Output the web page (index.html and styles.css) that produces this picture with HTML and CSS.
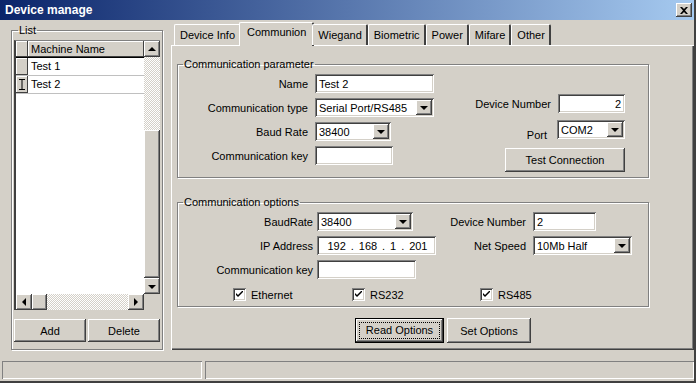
FILE: index.html
```html
<!DOCTYPE html>
<html>
<head>
    <link rel="stylesheet" href="styles.css">
</head>
<body>
    <div class="window">
        <div class="titlebar">
            <span class="title">Device manage</span>
            <span class="close-btn">
                <svg width="8" height="7" viewBox="0 0 8 7"><path d="M0 0h2l2 2 2-2h2L5 3.5 8 7H6L4 5 2 7H0l3-3.5z" fill="#000"/></svg>
            </span>
        </div>

        <div class="main">
            <!-- left: machine list -->
            <fieldset class="group list-group">
                <legend>List</legend>
                <div class="grid">
                    <div class="grid-view">
                        <div class="grid-rows">
                            <div class="grid-row head"><span class="ind"></span><span class="cell">Machine Name</span></div>
                            <div class="grid-row"><span class="ind"></span><span class="cell">Test 1</span></div>
                            <div class="grid-row">
                                <span class="ind">
                                    <svg width="6" height="11" viewBox="0 0 6 11"><path d="M0 0h6v1H3.5v9H6v1H0v-1h2.5V1H0z" fill="#000"/></svg>
                                </span>
                                <span class="cell">Test 2</span>
                            </div>
                        </div>
                        <div class="vscroll">
                            <span class="sb-btn"><i class="tri up"></i></span>
                            <span class="sb-track top"></span>
                            <span class="sb-thumb"></span>
                            <span class="sb-btn"><i class="tri down"></i></span>
                        </div>
                    </div>
                    <div class="hscroll">
                        <span class="sb-btn"><i class="tri left"></i></span>
                        <span class="sb-thumb h"></span>
                        <span class="sb-track"></span>
                        <span class="sb-btn"><i class="tri right"></i></span>
                        <span class="sb-corner"></span>
                    </div>
                </div>
                <div class="list-buttons">
                    <button class="btn">Add</button>
                    <button class="btn">Delete</button>
                </div>
            </fieldset>

            <!-- right: tabs -->
            <div class="tabs">
                <div class="tab-strip">
                    <span class="tab">Device Info</span>
                    <span class="tab active">Communion</span>
                    <span class="tab">Wiegand</span>
                    <span class="tab">Biometric</span>
                    <span class="tab">Power</span>
                    <span class="tab">Mifare</span>
                    <span class="tab">Other</span>
                </div>
                <div class="tab-panel">
                    <fieldset class="group param-group">
                        <legend>Communication parameter</legend>
                        <div class="param-left">
                            <label>Name</label>
                            <span class="field w119">Test 2</span>
                            <label>Communication type</label>
                            <span class="field combo w119">Serial Port/RS485<span class="drop"><i class="tri down"></i></span></span>
                            <label>Baud Rate</label>
                            <span class="field combo w76">38400<span class="drop"><i class="tri down"></i></span></span>
                            <label>Communication key</label>
                            <span class="field w78"></span>
                        </div>
                        <div class="param-right">
                            <label>Device Number</label>
                            <span class="field right w67">2</span>
                            <label class="low">Port</label>
                            <span class="field combo w68">COM2<span class="drop"><i class="tri down"></i></span></span>
                            <button class="btn test-btn">Test Connection</button>
                        </div>
                    </fieldset>

                    <fieldset class="group options-group">
                        <legend>Communication options</legend>
                        <div class="options-grid">
                            <label>BaudRate</label>
                            <span class="field combo w96">38400<span class="drop"><i class="tri down"></i></span></span>
                            <label>Device Number</label>
                            <span class="field w63">2</span>

                            <label>IP Address</label>
                            <span class="field ip w119"><span>192</span>.<span>168</span>.<span>1</span>.<span>201</span></span>
                            <label>Net Speed</label>
                            <span class="field combo w99">10Mb Half<span class="drop"><i class="tri down"></i></span></span>

                            <label>Communication key</label>
                            <span class="field w99"></span>
                        </div>
                        <div class="checks">
                            <span class="check"><i class="box"><svg width="7" height="7" viewBox="0 0 7 7"><path d="M0 2l2 2 5-5v2L2 6 0 4z" fill="#000"/></svg></i>Ethernet</span>
                            <span class="check"><i class="box"><svg width="7" height="7" viewBox="0 0 7 7"><path d="M0 2l2 2 5-5v2L2 6 0 4z" fill="#000"/></svg></i>RS232</span>
                            <span class="check"><i class="box"><svg width="7" height="7" viewBox="0 0 7 7"><path d="M0 2l2 2 5-5v2L2 6 0 4z" fill="#000"/></svg></i>RS485</span>
                        </div>
                    </fieldset>

                    <div class="option-buttons">
                        <button class="btn default"><span class="focus">Read Options</span></button>
                        <button class="btn">Set Options</button>
                    </div>
                </div>
            </div>
        </div>

        <div class="statusbar">
            <div class="status-cell first"></div>
            <div class="status-cell"></div>
        </div>
    </div>
</body>
</html>
```

FILE: styles.css
```css
* {
    box-sizing: border-box;
}

body {
    margin: 0;
    background: #d4d0c8;
    font-family: "Liberation Sans", Arial, sans-serif;
    font-size: 11px;
    color: #000;
}

.window {
    width: 696px;
    height: 383px;
    background: #d4d0c8;
    display: flex;
    flex-direction: column;
    border-right: 2px solid #404040;
    border-bottom: 2px solid #404040;
}

.titlebar {
    height: 20px;
    background: linear-gradient(to right, #0a246a, #a6caf0);
    display: flex;
    align-items: center;
    justify-content: space-between;
    padding: 0 2px 0 5px;
}

.title {
    color: #fff;
    font-weight: bold;
    font-size: 12px;
}

.close-btn {
    width: 16px;
    height: 14px;
    background: #d4d0c8;
    display: flex;
    align-items: center;
    justify-content: center;
    box-shadow: inset -1px -1px #404040, inset 1px 1px #fff, inset -2px -2px #808080;
}

/* 3D helpers */
.btn {
    font: inherit;
    color: #000;
    background: #d4d0c8;
    border: none;
    padding: 0;
    box-shadow: inset -1px -1px #404040, inset 1px 1px #fff, inset -2px -2px #808080, inset 2px 2px #d4d0c8;
}

.field {
    display: flex;
    align-items: center;
    height: 19px;
    background: #fff;
    padding: 0 4px;
    position: relative;
    white-space: nowrap;
    box-shadow: inset 1px 1px #808080, inset -1px -1px #fff, inset 2px 2px #404040, inset -2px -2px #d4d0c8;
}

.field.right {
    justify-content: flex-end;
}

.w63 { width: 63px; }
.w67 { width: 67px; }
.w68 { width: 68px; }
.w76 { width: 76px; }
.w78 { width: 78px; }
.w96 { width: 96px; }
.w99 { width: 99px; }
.w119 { width: 119px; }

.drop {
    position: absolute;
    right: 2px;
    top: 2px;
    width: 16px;
    height: 15px;
    background: #d4d0c8;
    display: flex;
    align-items: center;
    justify-content: center;
    box-shadow: inset -1px -1px #404040, inset 1px 1px #fff, inset -2px -2px #808080;
}

.tri {
    display: block;
    width: 0;
    height: 0;
    border: 4px solid transparent;
}

.tri.down {
    border-top: 4px solid #000;
    border-bottom: 0;
    margin-top: 1px;
}

.tri.up {
    border-bottom: 4px solid #000;
    border-top: 0;
}

.tri.left {
    border-right: 4px solid #000;
    border-left: 0;
}

.tri.right {
    border-left: 4px solid #000;
    border-right: 0;
}

/* group boxes */
.group {
    margin: 0;
    border: 1px solid #808080;
    box-shadow: inset 1px 1px #fff, 1px 1px #fff;
}

.group legend {
    padding: 0 1px;
    margin-left: 4px;
    line-height: 13px;
}

.main {
    flex: 1;
    display: flex;
    gap: 8px;
    padding: 4px 0 0 11px;
}

/* list */
.list-group {
    width: 152px;
    height: 326px;
    padding: 3px 1px 6px 2px;
    display: flex;
    flex-direction: column;
}

.grid {
    width: 146px;
    height: 270px;
    background: #fff;
    display: flex;
    flex-direction: column;
    border-left: 2px solid #404040;
    border-top: 1px solid #808080;
}

.grid-view {
    flex: 1;
    display: flex;
}

.grid-rows {
    flex: 1;
}

.grid-row {
    display: flex;
    height: 18px;
    border-bottom: 1px solid #c0c0c0;
}

.grid-row .ind {
    width: 12px;
    background: #d4d0c8;
    display: flex;
    align-items: center;
    justify-content: center;
    box-shadow: inset -1px -1px #404040, inset 1px 1px #fff;
}

.grid-row .cell {
    flex: 1;
    padding-left: 3px;
    line-height: 17px;
}

.grid-row.head {
    height: 17px;
    border-bottom: 1px solid #000;
}

.grid-row.head .cell {
    background: #d4d0c8;
    box-shadow: inset -1px -1px #404040, inset 1px 1px #fff;
}

.vscroll {
    width: 16px;
    display: flex;
    flex-direction: column;
}

.sb-btn {
    width: 16px;
    height: 16px;
    flex: none;
    background: #d4d0c8;
    display: flex;
    align-items: center;
    justify-content: center;
    box-shadow: inset -1px -1px #404040, inset 1px 1px #fff, inset -2px -2px #808080;
}

.sb-track {
    flex: 1;
    background: repeating-conic-gradient(#fff 0 25%, #d4d0c8 0 50%) 0 0 / 2px 2px;
}

.sb-track.top {
    flex: none;
    height: 73px;
}

.sb-thumb {
    flex: 1;
    background: #d4d0c8;
    box-shadow: inset -1px -1px #404040, inset 1px 1px #fff, inset -2px -2px #808080;
}

.sb-thumb.h {
    flex: none;
    width: 15px;
}

.hscroll {
    height: 16px;
    display: flex;
}

.sb-corner {
    width: 16px;
    background: #d4d0c8;
}

.list-buttons {
    display: flex;
    gap: 2px;
    margin-top: 9px;
}

.list-buttons .btn {
    width: 72px;
    height: 23px;
}

/* tabs */
.tabs {
    width: 523px;
    display: flex;
    flex-direction: column;
}

.tab-strip {
    display: flex;
    align-items: flex-end;
    height: 21px;
    padding-left: 3px;
    position: relative;
    z-index: 1;
}

.tab {
    height: 21px;
    padding: 4px 4px 0 5px;
    border-top: 1px solid #fff;
    border-left: 1px solid #fff;
    border-right: 2px solid #404040;
    border-radius: 2px 2px 0 0;
    background: #d4d0c8;
}

.tab.active {
    height: 24px;
    margin: 0 -2px -1px -2px;
    padding: 3px 6px 0 7px;
}

.tab-panel {
    flex: 1;
    margin-bottom: 9px;
    padding: 12px 0 0 5px;
    border-top: 1px solid #fff;
    border-left: 1px solid #fff;
    box-shadow: inset -1px -1px #404040, inset -2px -2px #808080;
}

.param-group {
    width: 472px;
    height: 120px;
    padding: 3px 23px 0 0;
    display: flex;
    justify-content: space-between;
}

.param-group legend,
.options-group legend {
    margin-left: 5px;
}

.param-left {
    display: grid;
    grid-template-columns: 130px auto;
    column-gap: 7px;
    row-gap: 5px;
    align-content: start;
    align-items: center;
}

.group label {
    text-align: right;
}

.param-right {
    display: grid;
    grid-template-columns: auto auto;
    column-gap: 6px;
    row-gap: 7px;
    align-content: start;
    align-items: center;
    justify-items: end;
    margin-top: 20px;
}

.param-right .low {
    align-self: end;
    margin-right: 4px;
    margin-bottom: -2px;
}

.test-btn {
    grid-column: 1 / 3;
    width: 120px;
    height: 24px;
    margin-top: 2px;
}

.options-group {
    width: 472px;
    height: 111px;
    margin-top: 18px;
    padding: 3px 0 0 0;
}

.options-grid {
    display: grid;
    grid-template-columns: 135px 119px 89px auto;
    column-gap: 4px;
    row-gap: 5px;
    align-items: center;
    justify-items: start;
}

.options-grid label {
    justify-self: end;
}

.options-grid label:nth-of-type(2),
.options-grid label:nth-of-type(4) {
    margin-right: 3px;
}

.field.ip {
    justify-content: space-around;
    padding: 0 6px 0 8px;
}

.checks {
    display: flex;
    margin-top: 9px;
    padding-left: 55px;
}

.check {
    display: flex;
    align-items: center;
    gap: 5px;
}

.check:nth-child(1) { width: 119px; }
.check:nth-child(2) { width: 128px; }

.check .box {
    width: 13px;
    height: 13px;
    background: #fff;
    display: flex;
    align-items: center;
    justify-content: center;
    box-shadow: inset 1px 1px #808080, inset -1px -1px #fff, inset 2px 2px #404040, inset -2px -2px #d4d0c8;
}

.option-buttons {
    display: flex;
    gap: 3px;
    margin-top: 11px;
    padding-left: 178px;
}

.option-buttons .btn {
    width: 84px;
    height: 25px;
}

.option-buttons .btn.default {
    width: 89px;
    outline: 1px solid #000;
    outline-offset: -1px;
    padding: 4px;
    box-shadow: inset -2px -2px #404040, inset 2px 2px #fff, inset -3px -3px #808080;
}

.focus {
    display: block;
    height: 100%;
    line-height: 15px;
    border: 1px dotted #000;
}

/* status bar */
.statusbar {
    height: 22px;
    display: flex;
    gap: 3px;
    padding: 2px 0 2px 2px;
}

.status-cell {
    flex: 1;
    box-shadow: inset 1px 1px #808080, inset -1px -1px #fff;
}

.status-cell.first {
    flex: none;
    width: 200px;
}
```
